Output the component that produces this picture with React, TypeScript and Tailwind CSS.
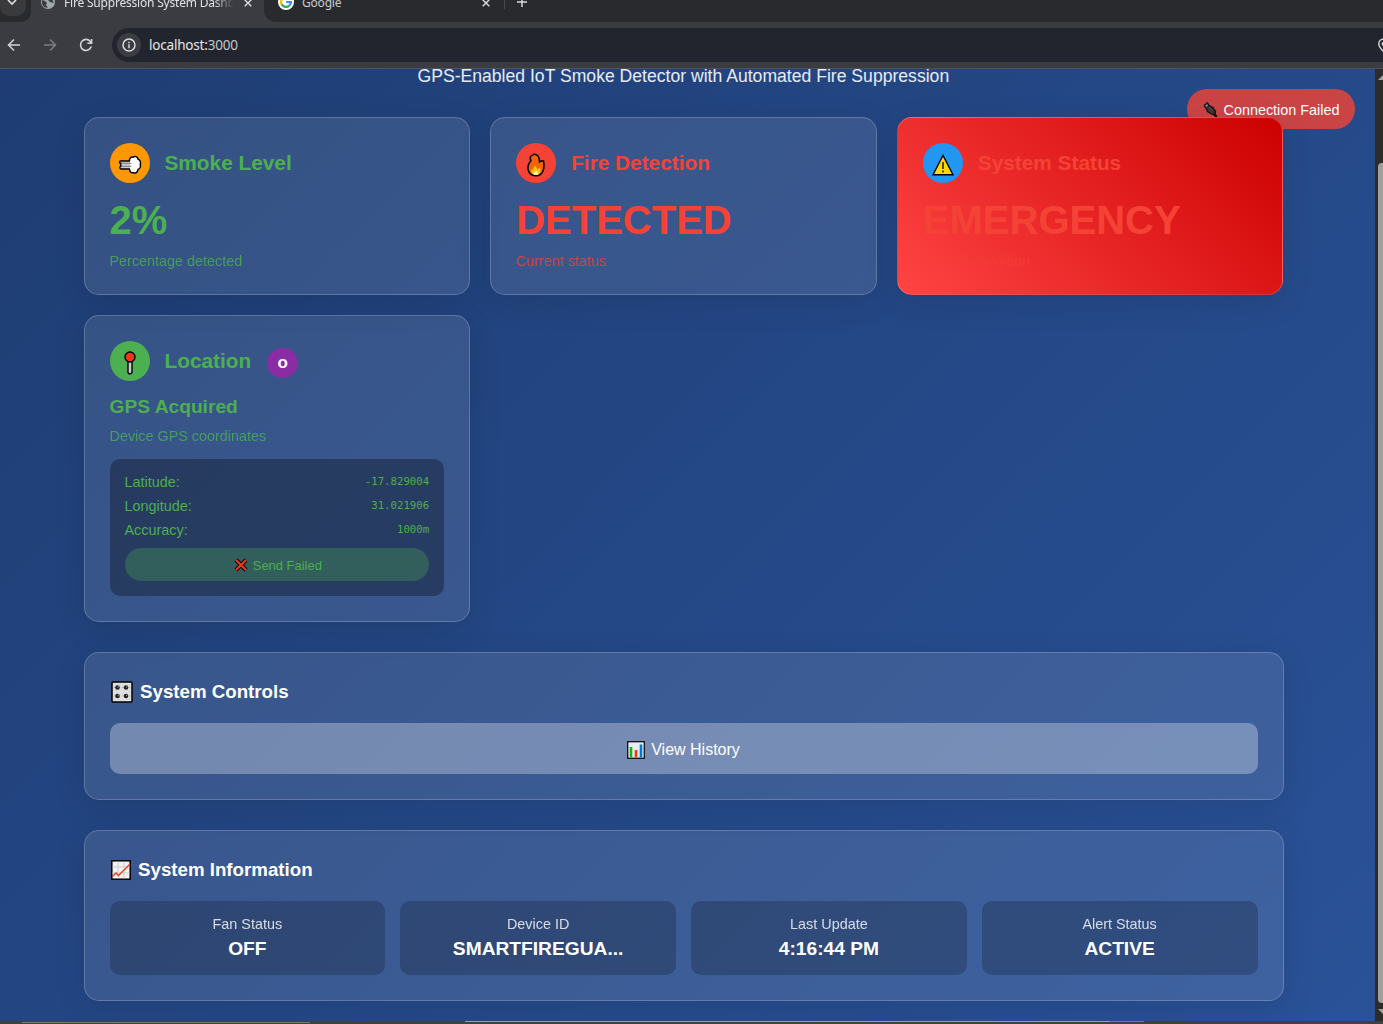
import React from "react";

const card =
  "rounded-[15px] border border-white/20 bg-white/10 p-[25px] shadow-[0_8px_32px_rgba(0,0,0,0.1)]";

function SmokeIcon() {
  return (
    <svg width="24" height="20" viewBox="0 0 24 20">
      <path d="M11.500 6C11 3.500 13 1.700 15 2.200C17 .8 19.500 1.500 20 4C22 5 23 7.500 22.300 9.500C23 12 21.500 14 20 14.500C19.500 17.500 17.500 18.500 15.500 17.700C13 18.300 11.300 16.500 11.700 14Z" fill="#fff" stroke="#000" strokeWidth="1.500" />
      <path d="M12.500 6H2.500C1.200 6 1.200 8.300 2.500 8.300H3.500C2.300 8.800 2.300 10.800 3.500 11.200H2.800C1.500 11.600 1.700 14 3 14H12.500" fill="#ccc" stroke="#000" strokeWidth="1.400" />
      <path d="M12 5.500H15V14.500H12Z" fill="#fff" />
      <path d="M3.500 8.300H13.500M3.500 11.300H13.500" stroke="#77797b" strokeWidth="1" />
    </svg>
  );
}

function FireIcon() {
  return (
    <svg width="18" height="24" viewBox="0 0 18 24">
      <path d="M7 1.200C11 1 12.500 4.500 12.500 9L14 8L16.500 8C18 15 16 22.800 9 22.800C3 22.800.2 18 1.200 13C1.500 10.500 3 9 4 7.500C2.500 5 3.500 2.500 5.500 2.300Z" fill="#f7630c" stroke="#000" strokeWidth="1.500" />
      <path d="M7.500 12.500C9.500 13.500 9 15 10.500 16.500C11.500 16 12 15 12.500 14.500C15 18 13 22 9 22C5 22 3.500 19 4.500 16.500C5.200 16.500 5.500 17 6 17C6 15 7.500 14.500 7.500 12.500Z" fill="#fdc500" />
      <path d="M9 17.500C10.500 18 11.500 20 10.800 21.700H7C6.300 20.300 6.800 19.200 7.200 18.800L8 19.300Z" fill="#fff8c0" />
    </svg>
  );
}

function WarningIcon() {
  return (
    <svg width="22" height="22" viewBox="0 0 22 22">
      <path d="M11 1.500L21 20.800H1Z" fill="#ffda00" stroke="#000" strokeWidth="1.400" />
      <path d="M11 8V15M11 16.500V18.500" stroke="#000" strokeWidth="1.300" />
    </svg>
  );
}

function PinIcon() {
  return (
    <svg width="12" height="24" viewBox="0 0 12 24">
      <path d="M4 9H8V21.500L6.800 22.800H5L4 21.500Z" fill="#c8cdd2" stroke="#000" strokeWidth="1.400" />
      <circle cx="6" cy="6" r="5" fill="#f03a17" stroke="#000" strokeWidth="1.400" />
    </svg>
  );
}

function PlugIcon() {
  return (
    <svg width="16" height="17" viewBox="0 0 16 17">
      <path d="M1 3.500L4.500.8L6 3.500L10 5.500L12.500 9.500L12 11.500L14.500 16M1 3.500L3 6L4.500 9.500L8.500 12L11 12.500L13.500 16" fill="#333" stroke="#111" strokeWidth="1.300" />
      <path d="M2 3.700L4.200 2L5 3.800L3.500 5Z" fill="#888" />
      <path d="M6 5L10 9" stroke="#555" />
    </svg>
  );
}

function CrossIcon() {
  return (
    <svg width="14" height="14" viewBox="0 0 14 14">
      <path d="M2 2L12 12M12 2L2 12" stroke="#000" strokeWidth="4" />
      <path d="M2 2L12 12M12 2L2 12" stroke="#f03a17" strokeWidth="2.200" />
    </svg>
  );
}

function KnobsIcon() {
  return (
    <svg width="22" height="22" viewBox="0 0 22 22">
      <rect x="1" y="1" width="20" height="20" rx="1" fill="#dedede" stroke="#000" strokeWidth="1.500" />
      {[6.5, 15].map((x) =>
        [6.5, 15].map((y) => (
          <g key={`${x}-${y}`}>
            <circle cx={x} cy={y} r="2.300" fill="#222" />
            <path d={`M${x} ${y}l1.500-1.300`} stroke="#aaa" />
          </g>
        ))
      )}
      <path d="M3 6.500h1M10.500 6.500h1M18 6.500h1M3 15h1M10.500 15h1M18 15h1" stroke="#aaa" />
    </svg>
  );
}

function BarsIcon() {
  return (
    <svg width="18" height="18" viewBox="0 0 18 18">
      <rect x=".7" y=".7" width="16.600" height="16.600" fill="#e9edf0" stroke="#111" strokeWidth="1.300" />
      <path d="M4 16.500V6" stroke="#16b116" strokeWidth="2.600" />
      <path d="M9 16.500V9" stroke="#f03a17" strokeWidth="2.600" />
      <path d="M14 16.500V3.500" stroke="#0078d4" strokeWidth="2.600" />
    </svg>
  );
}

function TrendIcon() {
  return (
    <svg width="20" height="20" viewBox="0 0 20 20">
      <rect x=".8" y=".8" width="18.400" height="18.400" fill="#f2f2f2" stroke="#000" strokeWidth="1.500" />
      <path d="M7 1.500V18.500M13 1.500V18.500M1.500 7H18.500M1.500 13H18.500" stroke="#ccc" />
      <path d="M1.500 16.500L5 13L7.500 15.500L18.500 4.500" fill="none" stroke="#f03a17" strokeWidth="1.300" />
    </svg>
  );
}

function Close() {
  return (
    <svg width="8" height="8" viewBox="0 0 8 8" className="shrink-0">
      <path d="M.7.7L7.300 7.300M7.300.7L.7 7.300" stroke="#d8dade" strokeWidth="1.400" />
    </svg>
  );
}

function BrowserBar() {
  return (
    <div className="h-[69px] shrink-0 overflow-hidden border-b border-[#505257] bg-[#3b3c42] font-['Noto_Sans']">
      <div className="flex h-[22px] text-[12px] leading-[16px] text-[#dfe1e5]">
        <div className="h-[22px] w-[31px] shrink-0 rounded-br-[10px] bg-[#282a2e]">
          <div className="flex h-[16px] w-[26px] justify-center rounded-b-[9px] bg-[#3a3a3c]">
            <svg width="10" height="6" viewBox="0 0 10 6" className="ml-[-2px]">
              <path d="M1 0L5 4L9 0" fill="none" stroke="#e0e0e0" strokeWidth="1.600" />
            </svg>
          </div>
        </div>
        <div className="flex w-[233px] shrink-0 items-start">
          <svg width="14" height="14" viewBox="0 0 14 14" className="ml-[10px] mt-[-5px] shrink-0">
            <circle cx="7" cy="7" r="7" fill="#a2a8ad" />
            <path d="M1 5L4 6L6 8L5 10L7 13L3 12L1 9ZM6 1L8 3L7 5L9 7L13 8L11 4L9 2Z" fill="#3b3c42" />
          </svg>
          <div className="ml-[9px] mt-[-5px] w-[170px] shrink-0 overflow-hidden whitespace-nowrap tracking-[-0.200px] [mask-image:linear-gradient(to_right,#000_88%,transparent)]">
            Fire Suppression System Dashb
          </div>
          <div className="ml-[10px] mt-[-1px]">
            <Close />
          </div>
        </div>
        <div className="flex flex-1 items-start rounded-bl-[12px] bg-[#282a2e]">
          <svg width="16" height="16" viewBox="0 0 16 16" className="ml-[14px] mt-[-6px] shrink-0">
            <circle cx="8" cy="8" r="8" fill="#fff" />
            <path d="M11.800 4.600A5 5 0 0 0 3.600 5.700" fill="none" stroke="#ea4335" strokeWidth="2.200" />
            <path d="M3.600 5.700A5 5 0 0 0 3.600 10.300" fill="none" stroke="#fbbc05" strokeWidth="2.200" />
            <path d="M3.600 10.300A5 5 0 0 0 11.300 11.700" fill="none" stroke="#34a853" strokeWidth="2.200" />
            <path d="M11.300 11.700A5 5 0 0 0 13 8H8.200" fill="none" stroke="#4285f4" strokeWidth="2.200" />
          </svg>
          <div className="ml-2 mt-[-5px] w-[180px] tracking-[-0.200px] text-[#c8cacd]">Google</div>
          <div className="mt-[-1px]">
            <Close />
          </div>
          <div className="ml-[14px] h-[9px] w-px bg-[#46484c]" />
          <svg width="12" height="12" viewBox="0 0 12 12" className="ml-[11px] mt-[-4px]">
            <path d="M6 1V11M1 6H11" stroke="#d8dade" strokeWidth="1.500" />
          </svg>
        </div>
      </div>
      <div className="flex h-[46px] items-center">
        <svg width="14" height="14" viewBox="0 0 14 14" className="ml-[7px]" fill="none" stroke="#d0d3d8" strokeWidth="1.500">
          <path d="M13 7H2M7 1.500L1.500 7L7 12.500" />
        </svg>
        <svg width="14" height="14" viewBox="0 0 14 14" className="ml-[22px]" fill="none" stroke="#7b7d82" strokeWidth="1.500">
          <path d="M1 7H12M7 1.500L12.500 7L7 12.500" />
        </svg>
        <svg width="14" height="14" viewBox="0 0 14 14" className="ml-[22px]" fill="none" stroke="#d0d3d8" strokeWidth="1.600">
          <path d="M12.300 8.500A5.500 5.500 0 1 1 11.500 3.700L12.500 5M12.600 1V5.200H8.400" />
        </svg>
        <div className="ml-[19px] flex h-[34px] flex-1 items-center overflow-hidden rounded-l-full bg-[#22252d]">
          <div className="ml-[5px] flex h-6 w-6 items-center justify-center rounded-full bg-[#3b3d43]">
            <svg width="14" height="14" viewBox="0 0 14 14" fill="none" stroke="#dfe1e5" strokeWidth="1.400">
              <circle cx="7" cy="7" r="6" />
              <path d="M7 6.200V10.300M7 3.700V5.200" />
            </svg>
          </div>
          <div className="ml-2 mt-px flex-1 text-[13.500px] tracking-[-0.2px] text-[#e4e6ea]">
            localhost:<span className="text-[#c3c6cb]">3000</span>
          </div>
          <svg width="5" height="15" viewBox="0 0 5 15" fill="none" stroke="#d0d3d8" strokeWidth="1.500">
            <path d="M6 1C2 1 .8 4 .8 6C.8 9 4 12 6 14" />
            <circle cx="5.500" cy="6" r="1.200" />
          </svg>
        </div>
      </div>
    </div>
  );
}

interface StatusProps {
  title: string;
  value: string;
  note: string;
  icon: React.ReactNode;
  iconBg: string;
  tone: string;
  emergency?: boolean;
}

function StatusCard({ title, value, note, icon, iconBg, tone, emergency }: StatusProps) {
  return (
    <div
      className={`relative h-[178px] rounded-[15px] border border-white/20 p-[25px] shadow-[0_8px_32px_rgba(0,0,0,0.1)] ${tone} ${
        emergency ? "bg-[linear-gradient(45deg,#ff4444,#cc0000)]" : "bg-white/10"
      }`}
    >
      <div className="flex items-center">
        <div className={`flex h-10 w-10 items-center justify-center rounded-full pt-1 ${iconBg}`}>{icon}</div>
        <h2 className="ml-[15px] text-[20.800px] font-bold leading-6">{title}</h2>
      </div>
      <div className="mt-[14px] text-[40px] font-bold leading-[46px]">{value}</div>
      <div className={`mt-[10px] text-[14.400px] leading-[17px] ${emergency ? "opacity-50" : "opacity-80"}`}>{note}</div>
    </div>
  );
}

const coordinates = [
  ["Latitude:", "-17.829004"],
  ["Longitude:", "31.021906"],
  ["Accuracy:", "1000m"],
];

const information = [
  ["Fan Status", "OFF"],
  ["Device ID", "SMARTFIREGUA..."],
  ["Last Update", "4:16:44 PM"],
  ["Alert Status", "ACTIVE"],
];

export default function App() {
  return (
    <div className="flex h-[1024px] w-[1383px] flex-col overflow-hidden bg-[#3f4144] font-['Liberation_Sans',sans-serif]">
      <BrowserBar />
      <div className="flex h-[952px] shrink-0">
        <main className="relative w-[1375px] overflow-hidden bg-[linear-gradient(135deg,#1e3c72,#2a5298)] bg-[length:100%_1040px] bg-bottom text-white">
          <div className="absolute right-5 top-5 flex h-10 w-[168px] items-center rounded-full bg-[rgba(244,67,54,0.8)] pl-4 pt-[2px] text-[14.400px]">
            <PlugIcon />
            <span className="ml-[4.500px] mt-px whitespace-nowrap">Connection Failed</span>
          </div>
          <p className="mt-[-3px] h-5 pl-[417.500px] text-[17.600px] leading-5 text-white/90">
            <span className="whitespace-nowrap">GPS-Enabled IoT Smoke Detector with Automated Fire Suppression</span>
          </p>
          <div className="ml-[83.500px] mt-[31px] w-[1200px]">
            <div className="grid grid-cols-3 gap-5">
              <StatusCard title="Smoke Level" value="2%" note="Percentage detected" icon={<SmokeIcon />} iconBg="bg-[#ff9800]" tone="text-[#4caf50]" />
              <StatusCard title="Fire Detection" value="DETECTED" note="Current status" icon={<FireIcon />} iconBg="bg-[#f44336]" tone="text-[#f44336]" />
              <StatusCard title="System Status" value="EMERGENCY" note="Overall condition" icon={<WarningIcon />} iconBg="bg-[#2196f3]" tone="text-[#f44336]" emergency />
              <section className={`h-[307px] text-[#4caf50] ${card}`}>
                <div className="flex items-center">
                  <div className="flex h-10 w-10 items-center justify-center rounded-full bg-[#4caf50] pt-1">
                    <PinIcon />
                  </div>
                  <h2 className="ml-[15px] text-[20.800px] font-bold leading-6">Location</h2>
                  <span className="ml-4 mt-[3px] flex h-[30px] w-[31px] items-center justify-center rounded-full bg-[#8a2da5] text-[17px] font-bold text-white">o</span>
                </div>
                <div className="mt-[15px] text-[19.200px] font-bold leading-[22px]">GPS Acquired</div>
                <div className="mt-[10px] text-[14.400px] leading-[17px] opacity-80">Device GPS coordinates</div>
                <div className="mt-[14px] h-[137px] rounded-[10px] bg-black/30 p-[15px]">
                  <div className="flex flex-col gap-2">
                    {coordinates.map(([label, value]) => (
                      <div key={label} className="flex h-4 justify-between text-[14.400px] leading-4">
                        <span>{label}</span>
                        <span className="font-['DejaVu_Sans_Mono',monospace] text-[10.700px] leading-4">{value}</span>
                      </div>
                    ))}
                  </div>
                  <button className="mt-[10px] flex h-[33px] w-full items-center justify-center gap-[5px] rounded-full bg-[rgba(76,175,80,0.3)] pt-px text-[12.960px]">
                    <CrossIcon />
                    <span className="mr-[-2px] mt-px">Send Failed</span>
                  </button>
                </div>
              </section>
            </div>
            <section className={`mt-[30px] h-[148px] ${card}`}>
              <h3 className="flex h-[25px] items-center pl-[1.500px] pt-[2px] text-[18.720px] font-bold">
                <KnobsIcon />
                <span className="ml-[7px] mt-px">System Controls</span>
              </h3>
              <button className="mt-5 flex h-[51px] w-full items-center justify-center gap-[6px] rounded-[10px] bg-[rgba(255,255,255,0.3)] pt-[2px] text-[16px]">
                <BarsIcon />
                View History
              </button>
            </section>
            <section className={`mt-[30px] h-[171px] ${card}`}>
              <h3 className="flex h-[25px] items-center pl-[1.500px] pt-[2px] text-[18.720px] font-bold">
                <TrendIcon />
                <span className="ml-[7px] mt-px">System Information</span>
              </h3>
              <div className="mt-5 grid grid-cols-4 gap-[15px]">
                {information.map(([label, value]) => (
                  <div key={label} className="h-[74px] rounded-[10px] bg-black/20 pt-[15px] text-center">
                    <div className="text-[14.400px] leading-4 opacity-80">{label}</div>
                    <div className="mt-[6px] text-[19.200px] font-bold leading-[22px]">{value}</div>
                  </div>
                ))}
              </div>
            </section>
          </div>
        </main>
        <div className="flex w-2 flex-col overflow-hidden bg-[#2c2c2d]">
          <svg width="8" height="12" viewBox="0 0 8 12" className="shrink-0">
            <path d="M3 11L8 6V11Z" fill="#a0a0a0" />
          </svg>
          <div className="ml-[3px] mt-[82px] h-[840px] w-[5px] shrink-0 rounded-l-[4px] bg-[#9f9f9f]" />
          <svg width="8" height="12" viewBox="0 0 8 12" className="mt-[4px] shrink-0">
            <path d="M3 2H8V7Z" fill="#a0a0a0" />
          </svg>
        </div>
      </div>
      <div className="flex h-[3px] shrink-0 items-start">
        <div className="ml-[22px] mt-px h-px w-[288px] bg-[#77796f]" />
        <div className="ml-[155px] h-px w-[645px] bg-[#999ca0]" />
        <div className="h-px w-[34px] bg-[#77796f]" />
      </div>
    </div>
  );
}
